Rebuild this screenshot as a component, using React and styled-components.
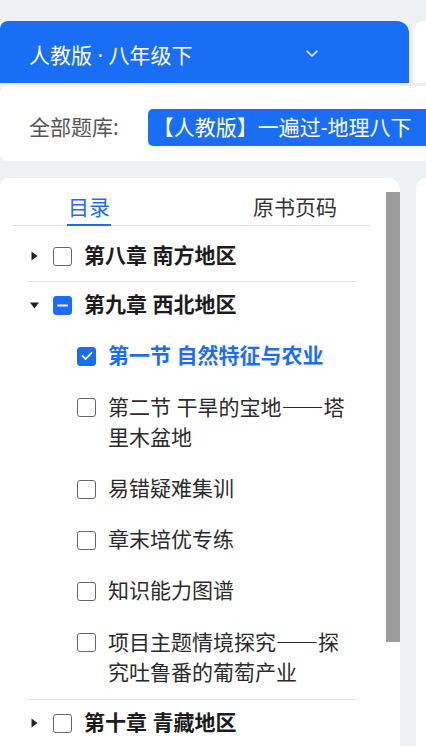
import React from "react";
import styled, { createGlobalStyle } from "styled-components";

const BLUE = "#1a6ef6";

const Global = createGlobalStyle`
  html, body { margin: 0; padding: 0; background: #eef0f3; }
  body { font-family: "Noto Sans", "Noto Sans CJK SC", sans-serif; overflow: hidden; }
  * { box-sizing: border-box; }
`;

const Page = styled.div`
  width: 426px;
  height: 746px;
  overflow: hidden;
  padding-top: 21px;
  background: #eef0f3;
`;

const HeaderRow = styled.div`
  display: flex;
  gap: 4px;
  height: 62px;
`;

const VersionBar = styled.div`
  flex: 0 0 409px;
  display: flex;
  align-items: center;
  padding: 6px 91px 0 29px;
  background: ${BLUE};
  border-radius: 8px 12px 0 0;
  color: #fff;
  font-size: 21px;
  line-height: 28px;
`;

const Chevron = styled.svg`
  margin-left: auto;
  margin-bottom: 3px;
`;

const Peek = styled.div`
  flex: 1;
  background: #fff;
  border-radius: 10px 0 0 0;
`;

const BankBar = styled.div`
  margin-top: 3px;
  height: 75px;
  display: flex;
  align-items: flex-start;
  padding: 23px 0 0 29px;
  background: #fff;
  border-radius: 8px 0 0 8px;
  white-space: nowrap;
  overflow: hidden;
`;

const BankLabel = styled.span`
  color: #555;
  font-size: 21px;
  line-height: 37px;
  margin-right: 29px;
`;

const Tag = styled.span`
  flex: none;
  background: ${BLUE};
  color: #fff;
  font-size: 21px;
  line-height: 37px;
  padding: 0 24px 0 5px;
  border-radius: 5px;
`;

const BodyRow = styled.div`
  display: flex;
  gap: 16px;
  margin-top: 17px;
  height: 600px;
`;

const TreeCard = styled.div`
  position: relative;
  flex: 0 0 400px;
  background: #fff;
  border-radius: 8px 12px 0 0;
  overflow: hidden;
`;

const ScrollThumb = styled.div`
  position: absolute;
  right: 0;
  top: 14px;
  width: 14px;
  height: 450px;
  background: #9d9d9d;
`;

const Tabs = styled.div`
  display: flex;
  justify-content: space-between;
  margin: 0 30px 0 13px;
  padding: 15px 32px 0 54px;
  border-bottom: 1px solid #e2e3e6;
`;

const Tab = styled.div`
  font-size: 21px;
  line-height: 28px;
  padding: 0 1px 3px;
  color: ${(p) => (p.$active ? BLUE : "#333")};
  border-bottom: 2px solid ${(p) => (p.$active ? BLUE : "transparent")};
  margin-bottom: -1px;
`;

const TreeList = styled.div`
  margin: 0 44px 0 28px;
  padding-top: 7px;
`;

const Chapter = styled.div`
  border-bottom: 1px solid #e4e5e8;
`;

const ChapterRow = styled.div`
  display: flex;
  align-items: center;
  height: ${(p) => (p.$open ? "49px" : "48px")};
  padding-bottom: 5px;
`;

const Caret = styled.span`
  width: 25px;
  display: flex;
  align-items: center;
  padding-left: ${(p) => (p.$open ? "2px" : "3px")};
  padding-top: 3px;
`;

const Box = styled.span`
  flex: none;
  width: 19px;
  height: 19px;
  border-radius: 3px;
  border: 1.5px solid ${(p) => (p.$on ? BLUE : "#666")};
  background: ${(p) => (p.$on ? BLUE : "#fff")};
  display: flex;
  align-items: center;
  justify-content: center;
  margin-right: 12px;
  margin-top: 3px;
`;

const ChapterTitle = styled.span`
  font-size: 21px;
  font-weight: 700;
  color: #1c1c1c;
  line-height: 30px;
`;

const SubList = styled.div`
  padding-left: 49px;
`;

const SubRow = styled.div`
  display: flex;
  align-items: flex-start;
  padding: 8.5px 0 12.5px;
`;

const SubBoxWrap = styled.span`
  height: 30px;
  display: flex;
  align-items: center;
`;

const SubTitle = styled.span`
  font-size: 21px;
  line-height: 30px;
  color: ${(p) => (p.$on ? BLUE : "#2b2b2b")};
  font-weight: ${(p) => (p.$on ? 700 : 400)};
  flex: 1;
`;

const Dash = styled.span`
  font-family: "Noto Sans CJK SC", sans-serif;
  font-feature-settings: "fwid" 1;
`;

const RightTri = () => (
  <svg width="7" height="10" viewBox="0 0 7 10">
    <path d="M0.5 0.5 L6.5 5 L0.5 9.5 Z" fill="#222" />
  </svg>
);
const DownTri = () => (
  <svg width="9" height="7" viewBox="0 0 9 7">
    <path d="M0 0.5 L9 0.5 L4.5 6.5 Z" fill="#222" />
  </svg>
);

const Check = ({ state }) => (
  <Box $on={state !== "off"}>
    {state === "half" && (
      <svg width="11" height="3" viewBox="0 0 11 3">
        <rect x="0" y="0.5" width="11" height="2" rx="1" fill="#fff" />
      </svg>
    )}
    {state === "on" && (
      <svg width="12" height="10" viewBox="0 0 12 10">
        <path d="M1.5 5 L4.7 8 L10.5 1.8" fill="none" stroke="#fff" strokeWidth="1.8" strokeLinecap="round" strokeLinejoin="round" />
      </svg>
    )}
  </Box>
);

const withDash = (t) => {
  const i = t.indexOf("——");
  if (i < 0) return t;
  return (
    <>
      {t.slice(0, i)}
      <Dash>{t.slice(i, i + 3)}</Dash>
      {t.slice(i + 3)}
    </>
  );
};

const subs = [
  { t: "第一节 自然特征与农业", on: true },
  { t: "第二节 干旱的宝地——塔里木盆地" },
  { t: "易错疑难集训" },
  { t: "章末培优专练" },
  { t: "知识能力图谱" },
  { t: "项目主题情境探究——探究吐鲁番的葡萄产业" },
];

export default function App() {
  return (
    <>
      <Global />
      <Page>
        <HeaderRow>
          <VersionBar>
            <span>人教版 · 八年级下</span>
            <Chevron width="12" height="7" viewBox="0 0 12 7">
              <path d="M0.7 0.7 L6 6 L11.3 0.7" fill="none" stroke="#fff" strokeWidth="1.3" />
            </Chevron>
          </VersionBar>
          <Peek />
        </HeaderRow>
        <BankBar>
          <BankLabel>全部题库:</BankLabel>
          <Tag>【人教版】一遍过-地理八下</Tag>
        </BankBar>
        <BodyRow>
          <TreeCard>
            <Tabs>
              <Tab $active>目录</Tab>
              <Tab>原书页码</Tab>
            </Tabs>
            <TreeList>
              <Chapter>
                <ChapterRow>
                  <Caret><RightTri /></Caret>
                  <Check state="off" />
                  <ChapterTitle>第八章 南方地区</ChapterTitle>
                </ChapterRow>
              </Chapter>
              <Chapter>
                <ChapterRow $open>
                  <Caret $open><DownTri /></Caret>
                  <Check state="half" />
                  <ChapterTitle>第九章 西北地区</ChapterTitle>
                </ChapterRow>
                <SubList>
                  {subs.map((s) => (
                    <SubRow key={s.t}>
                      <SubBoxWrap><Check state={s.on ? "on" : "off"} /></SubBoxWrap>
                      <SubTitle $on={s.on}>{withDash(s.t)}</SubTitle>
                    </SubRow>
                  ))}
                </SubList>
              </Chapter>
              <Chapter>
                <ChapterRow>
                  <Caret><RightTri /></Caret>
                  <Check state="off" />
                  <ChapterTitle>第十章 青藏地区</ChapterTitle>
                </ChapterRow>
              </Chapter>
            </TreeList>
            <ScrollThumb />
          </TreeCard>
          <Peek />
        </BodyRow>
      </Page>
    </>
  );
}
